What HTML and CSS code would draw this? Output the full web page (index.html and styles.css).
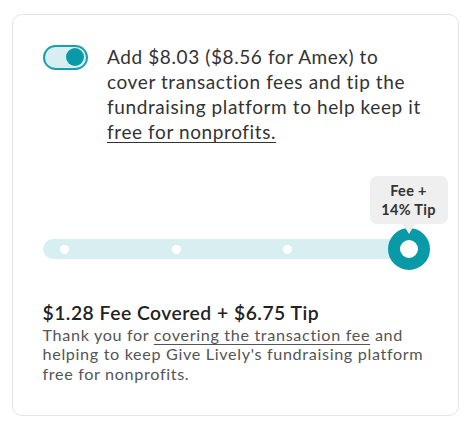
FILE: index.html
```html
<!DOCTYPE html>
<html>
<head>
<meta charset="utf-8">
<link rel="stylesheet" href="styles.css">
</head>
<body>
<div class="card">
  <div class="opt">
    <span class="toggle"><span class="knob"></span></span>
    <p class="opt-text">Add $8.03 ($8.56 for Amex) to<br>cover transaction fees and tip the<br>fundraising platform to help keep it<br><a class="link" href="#">free for nonprofits.</a></p>
  </div>
  <div class="slider">
    <div class="track">
      <span class="dot"></span>
      <span class="dot"></span>
      <span class="dot"></span>
    </div>
    <div class="handle">
      <div class="tip">Fee +<br>14% Tip</div>
    </div>
  </div>
  <h2 class="summary">$1.28 Fee Covered + $6.75 Tip</h2>
  <p class="desc">Thank you for <a class="link" href="#">covering the transaction fee</a> and<br>helping to keep Give Lively's fundraising platform<br>free for nonprofits.</p>
</div>
</body>
</html>
```
FILE: styles.css
```css
* { box-sizing: border-box; }
body {
  margin: 0;
  padding: 14px 0 0 12px;
  font-family: Lato, "Open Sans", sans-serif;
  color: #333;
  background: #fff;
}
.card {
  width: 447px;
  height: 402px;
  border: 1.5px solid #e4e4e4;
  border-radius: 10px;
  padding: 29px 27.5px 0 29.5px;
}
.opt {
  display: flex;
  align-items: flex-start;
}
.toggle {
  flex: none;
  width: 45px;
  height: 25px;
  border: 2px solid #1aa0ad;
  background: #d7eff2;
  border-radius: 13px;
  display: flex;
  align-items: center;
  justify-content: flex-end;
  padding-right: 2px;
  margin: 0.5px 19.5px 0 0;
}
.knob {
  width: 18px;
  height: 18px;
  border-radius: 50%;
  background: #0a9aa7;
}
.opt-text {
  margin: 0;
  font-size: 19px;
  letter-spacing: 0.6px;
  line-height: 25px;
  white-space: nowrap;
  color: #333;
}
.link {
  color: inherit;
  text-decoration: underline;
  text-underline-offset: 3px;
  text-decoration-thickness: 1px;
}
.slider {
  position: relative;
  margin-top: 84px;
  height: 42px;
  display: flex;
  align-items: center;
}
.track {
  width: 366px;
  height: 20px;
  border-radius: 10px;
  background: #d8eff1;
  display: flex;
  align-items: center;
  gap: 102.5px;
  padding-left: 17.5px;
}
.dot {
  width: 9px;
  height: 9px;
  border-radius: 50%;
  background: #fff;
}
.handle {
  position: absolute;
  left: 345px;
  top: 0;
  width: 42px;
  height: 42px;
  border-radius: 50%;
  border: 12px solid #0a9aa7;
  background: #fff;
}
.tip {
  position: absolute;
  bottom: calc(100% + 16px);
  left: 50%;
  transform: translateX(-50%);
  width: 78px;
  padding: 5px 0;
  background: #efefef;
  border-radius: 7px;
  text-align: center;
  font-size: 14.5px;
  font-weight: 700;
  letter-spacing: 0.3px;
  line-height: 19px;
  color: #333;
}
.tip::after {
  content: "";
  position: absolute;
  top: 100%;
  left: 50%;
  margin-left: -6px;
  border-left: 6px solid transparent;
  border-right: 6px solid transparent;
  border-top: 10px solid #efefef;
}
.summary {
  margin: 29.5px 0 0;
  font-size: 19.3px;
  font-weight: 600;
  letter-spacing: 0.5px;
  line-height: 25px;
  color: #222;
  white-space: nowrap;
}
.desc {
  margin: 0;
  font-size: 16.2px;
  letter-spacing: 0.65px;
  line-height: 19.5px;
  color: #555;
  white-space: nowrap;
}
```
